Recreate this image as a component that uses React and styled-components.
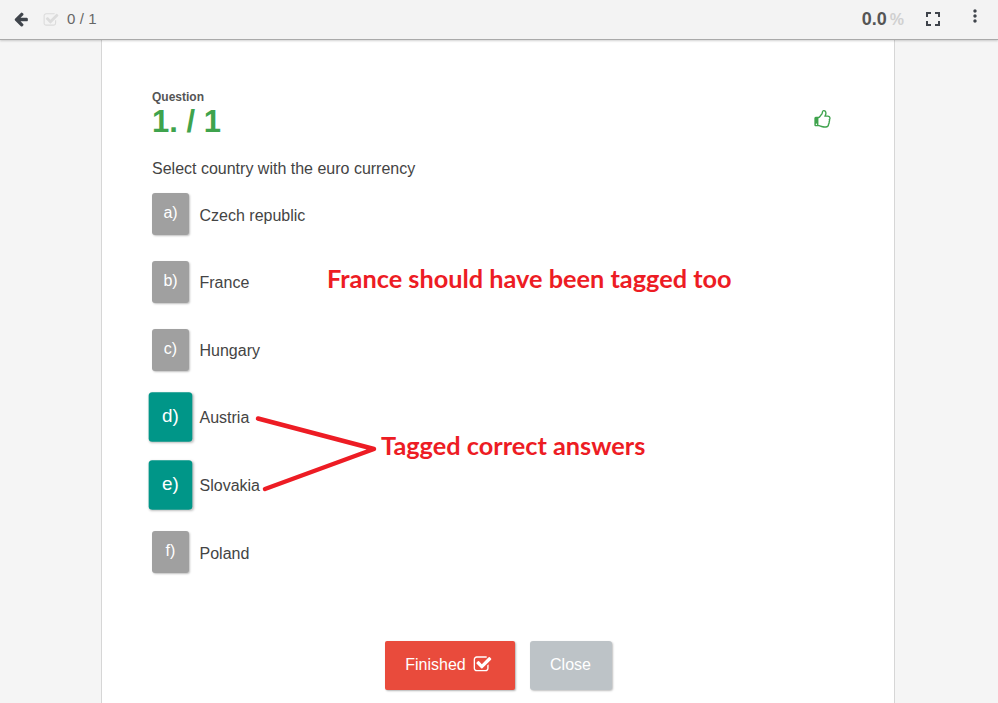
import React from "react";
import styled, { createGlobalStyle } from "styled-components";
import { MdFullscreen, MdMoreVert } from "react-icons/md";

const Global = createGlobalStyle`
  html, body { margin: 0; padding: 0; height: 100%; overflow: hidden; background: #f5f5f5; }
  body { font-family: "Liberation Sans", Arial, sans-serif; color: #444; }
`;

const Glyph = ({ d, className }) => (
  <svg className={className} viewBox="0 0 1792 1792" width="1em" height="1em" fill="currentColor">
    <path d={d} />
  </svg>
);

const ARROW =
  "M1664 896v128q0 53-32.5 90.5t-84.5 37.5h-704l293 294q38 36 38 90t-38 90l-75 76q-37 37-90 37-52 0-91-37l-651-652q-37-37-37-90 0-52 37-91l651-650q38-38 91-38 52 0 90 38l75 74q38 38 38 91t-38 91l-293 293h704q52 0 84.5 37.5t32.5 90.5z";
const CHECK =
  "M1472 930v318q0 119-84.5 203.5t-203.5 84.5h-832q-119 0-203.5-84.5t-84.5-203.5v-832q0-119 84.5-203.5t203.5-84.5h832q63 0 117 25 15 7 18 23 3 17-9 29l-49 49q-10 10-23 10-3 0-9-2-23-6-45-6h-832q-66 0-113 47t-47 113v832q0 66 47 113t113 47h832q66 0 113-47t47-113v-254q0-13 9-22l64-64q10-10 23-10 6 0 12 3 20 8 20 29zm231-489l-814 814q-24 24-57 24t-57-24l-430-430q-24-24-24-57t24-57l110-110q24-24 57-24t57 24l263 263 647-647q24-24 57-24t57 24l110 110q24 24 24 57t-24 57z";
const THUMB =
  "M384 1344q0-26-19-45t-45-19-45 19-19 45 19 45 45 19 45-19 19-45zm1152-576q0-51-39-89.5t-89-38.5h-352q0-58 48-159.5t48-160.5q0-98-32-145t-128-47q-26 26-38 85t-30.5 125.5-59.5 109.5q-22 23-77 91-4 5-23 30t-31.5 41-34.5 42.5-40 44-38.5 35.5-40 27-35.5 9h-32v640h32q13 0 31.5 3t33 6.5 38 11 35 11.5 35.5 12.5 29 10.5q211 73 342 73h121q192 0 192-167 0-26-5-56 30-16 47.5-52.5t17.5-73.5-18-69q53-50 53-119 0-25-10-55.5t-25-47.5q32-1 53.5-47t21.5-81zm128-1q0 89-49 163 9 33 9 69 0 77-38 144 3 21 3 43 0 101-60 178 1 139-85 219.5t-227 80.5h-129q-96 0-189.5-22.5t-216.5-65.5q-116-40-138-40h-288q-53 0-90.5-37.5t-37.5-90.5v-640q0-53 37.5-90.5t90.5-37.5h274q36-24 137-155 58-75 107-128 24-25 35.5-85.5t30.5-126.5 62-108q39-37 90-37 84 0 151 32.5t102 101.5 35 186q0 93-48 192h176q104 0 180 76t76 179z";

const Page = styled.div`
  position: relative;
  width: 998px;
  height: 703px;
  overflow: hidden;
  display: flex;
  flex-direction: column;
`;

const TopBar = styled.header`
  position: relative;
  z-index: 2;
  box-sizing: border-box;
  height: 40px;
  flex: none;
  background: #f3f3f3;
  border-bottom: 1px solid #a9a9a9;
  box-shadow: 0 1px 2px rgba(0, 0, 0, 0.18);
  display: flex;
  align-items: center;
  padding: 0 16px 2px 13px;
`;

const Back = styled(Glyph)`
  font-size: 16px;
  color: #3f444b;
`;

const Count = styled.div`
  display: flex;
  align-items: center;
  gap: 8px;
  margin-left: 14px;
  font-size: 15px;
  color: #666;
  letter-spacing: 0.1px;
  svg { font-size: 16px; color: #dcdcdc; margin-top: 2px; }
`;

const Spacer = styled.div`
  flex: 1;
`;

const Score = styled.div`
  font-size: 18px;
  font-weight: 700;
  color: #555;
  display: flex;
  align-items: baseline;
  gap: 3px;
  margin-right: 17px;
  margin-top: 1px;
`;

const Percent = styled.span`
  color: #d0d0d0;
  font-size: 16px;
`;

const FullBtn = styled(MdFullscreen)`
  font-size: 24px;
  color: #3f444b;
  margin-right: 20px;
`;

const More = styled(MdMoreVert)`
  font-size: 20px;
  color: #3f444b;
  margin-right: -3px;
  margin-top: -5px;
`;

const Card = styled.main`
  width: 794px;
  box-sizing: border-box;
  flex: 1;
  margin-left: 101px;
  background: #fff;
  border-left: 1px solid #d6d6d6;
  border-right: 1px solid #d6d6d6;
  padding: 51px 50px 0 50px;
  display: flex;
  flex-direction: column;
`;

const Head = styled.div`
  display: flex;
  justify-content: space-between;
  align-items: flex-start;
`;

const Label = styled.div`
  font-size: 12px;
  font-weight: 700;
  line-height: 13px;
  color: #555;
`;

const Num = styled.div`
  font-size: 31px;
  line-height: 30px;
  font-weight: 700;
  color: #3fa34d;
  margin-top: 3px;
`;

const Thumb = styled(Glyph)`
  font-size: 19px;
  color: #3fa34d;
  margin: 19px 12px 0 0;
`;

const Prompt = styled.p`
  margin: 22px 0 0;
  font-size: 16px;
  line-height: 20px;
  color: #444;
`;

const Answers = styled.div`
  display: grid;
  grid-auto-rows: 67.6px;
  margin-top: 1.6px;
`;

const Row = styled.div`
  display: flex;
  align-items: center;
  gap: 10.5px;
  font-size: 16px;
  color: #444;
`;

const AnswerText = styled.span`
  padding-top: 2.5px;
`;

const Tile = styled.div`
  width: 37px;
  height: 42px;
  flex: none;
  box-sizing: border-box;
  border-radius: 3px;
  padding-bottom: 2px;
  display: flex;
  align-items: center;
  justify-content: center;
  color: #fff;
  font-size: 16px;
  background: ${(p) => (p.$on ? "#009688" : "#a0a0a0")};
  box-shadow: 1px 1px 2px rgba(0, 0, 0, 0.25);
  transform: ${(p) => (p.$on ? "scale(1.18)" : "none")};
`;

const Footer = styled.div`
  display: flex;
  justify-content: center;
  align-items: center;
  gap: 15px;
  margin-top: 54.8px;
`;

const Finish = styled.button`
  width: 130px;
  height: 49px;
  border: 0;
  border-radius: 2px;
  background: #e94b3c;
  color: #fff;
  font: 16px "Liberation Sans", Arial, sans-serif;
  display: flex;
  align-items: center;
  justify-content: center;
  gap: 7px;
  padding: 0 2px 1px 0;
  box-shadow: 1px 1px 2px rgba(0, 0, 0, 0.3);
  svg { font-size: 19px; }
`;

const Close = styled.button`
  width: 82px;
  height: 49px;
  border: 0;
  border-radius: 3px;
  background: #bdc3c7;
  color: #fff;
  font: 16px "Liberation Sans", Arial, sans-serif;
  box-shadow: 1px 1px 2px rgba(0, 0, 0, 0.25);
`;

const Note = styled.div`
  position: absolute;
  z-index: 3;
  left: ${(p) => p.$x}px;
  top: ${(p) => p.$y}px;
  font-family: Lato, "Open Sans", sans-serif;
  font-weight: 700;
  font-size: 25.3px;
  line-height: 30px;
  color: #ed1c24;
  white-space: nowrap;
`;

const Arrows = styled.svg`
  position: absolute;
  z-index: 3;
  left: 250px;
  top: 410px;
`;

const answers = [
  ["a)", "Czech republic"],
  ["b)", "France"],
  ["c)", "Hungary"],
  ["d)", "Austria", true],
  ["e)", "Slovakia", true],
  ["f)", "Poland"],
];

export default function App() {
  return (
    <Page>
      <Global />
      <TopBar>
        <Back d={ARROW} />
        <Count>
          <Glyph d={CHECK} />
          <span>0 / 1</span>
        </Count>
        <Spacer />
        <Score>
          0.0 <Percent>%</Percent>
        </Score>
        <FullBtn />
        <More />
      </TopBar>
      <Card>
        <Head>
          <div>
            <Label>Question</Label>
            <Num>1. / 1</Num>
          </div>
          <Thumb d={THUMB} />
        </Head>
        <Prompt>Select country with the euro currency</Prompt>
        <Answers>
          {answers.map(([k, t, on]) => (
            <Row key={k}>
              <Tile $on={on}>{k}</Tile>
              <AnswerText>{t}</AnswerText>
            </Row>
          ))}
        </Answers>
        <Footer>
          <Finish>
            Finished <Glyph d={CHECK} />
          </Finish>
          <Close>Close</Close>
        </Footer>
      </Card>
      <Note $x={327} $y={263}>France should have been tagged too</Note>
      <Note $x={381} $y={430}>Tagged correct answers</Note>
      <Arrows width="130" height="90" viewBox="0 0 130 90">
        <path
          d="M8 8.5 L124 39 L15 79"
          fill="none"
          stroke="#ed1c24"
          strokeWidth="4.5"
          strokeLinecap="round"
          strokeLinejoin="round"
        />
      </Arrows>
    </Page>
  );
}
